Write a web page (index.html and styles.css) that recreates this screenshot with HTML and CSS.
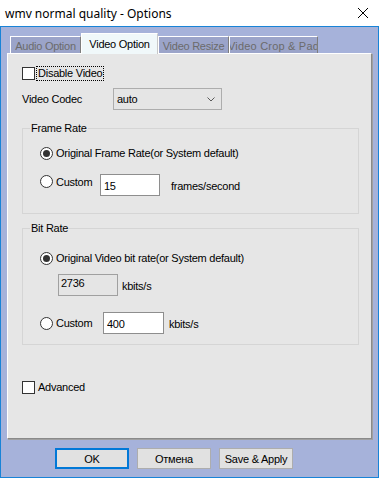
FILE: index.html
```html
<!doctype html>
<html lang="en">
    <head>
        <meta charset="UTF-8" />
        <title>wmv normal quality - Options</title>
        <link rel="stylesheet" href="styles.css">
    </head>
    <body>
        <div class="titlebar">
            <span class="title">wmv normal quality - Options</span>
            <svg class="close" width="12" height="12" viewBox="0 0 12 12">
                <path d="M1 1 L11 11 M11 1 L1 11" stroke="#000" stroke-width="1" fill="none" />
            </svg>
        </div>

        <div class="frame">
            <!-- Tabs -->
            <div class="tabs">
                <div class="tab tab-audio">Audio Option</div>
                <div class="tab tab-video active">Video Option</div>
                <div class="tab tab-resize">Video Resize</div>
                <div class="tab tab-crop"><span>Video Crop &amp; Pad</span></div>
            </div>

            <div class="panel">
                <div class="check-row first">
                    <span class="checkbox"></span>
                    <span class="check-label focus">Disable Video</span>
                </div>

                <div class="codec-row">
                    <span class="codec-label">Video Codec</span>
                    <div class="select">
                        <span>auto</span>
                        <svg class="chevron" width="8" height="5" viewBox="0 0 8 5">
                            <path d="M0.5 0.5 L4 4 L7.5 0.5" stroke="#5a5a5a" fill="none" />
                        </svg>
                    </div>
                </div>

                <!-- Frame Rate -->
                <fieldset class="group group-frame">
                    <legend>Frame Rate</legend>
                    <div class="radio-row fr-original">
                        <span class="radio checked"></span>
                        <span class="radio-label">Original Frame Rate(or System default)</span>
                    </div>
                    <div class="radio-row fr-custom">
                        <span class="radio"></span>
                        <span class="radio-label custom-label">Custom</span>
                        <input class="num" value="15" />
                        <span class="unit">frames/second</span>
                    </div>
                </fieldset>

                <!-- Bit Rate -->
                <fieldset class="group group-bit">
                    <legend>Bit Rate</legend>
                    <div class="radio-row br-original">
                        <span class="radio checked"></span>
                        <span class="radio-label">Original Video bit rate(or System default)</span>
                    </div>
                    <div class="rate-row">
                        <span class="readonly">2736</span>
                        <span class="unit">kbits/s</span>
                    </div>
                    <div class="radio-row br-custom">
                        <span class="radio"></span>
                        <span class="radio-label custom-label">Custom</span>
                        <input class="num" value="400" />
                        <span class="unit">kbits/s</span>
                    </div>
                </fieldset>

                <div class="check-row advanced">
                    <span class="checkbox"></span>
                    <span class="check-label">Advanced</span>
                </div>
            </div>

            <div class="buttons">
                <button class="default">OK</button>
                <button>Отмена</button>
                <button>Save &amp; Apply</button>
            </div>
        </div>
    </body>
</html>
```

FILE: styles.css
```css
:root {
    --accent: #1883d7;
    --chrome: #a6b2da;
    --tab-off: #9ba4c9;
    --tab-on: #f0f8fa;
    --face: #e6e6e6;
    --group-line: #d5d5d5;
    --field-line: #8e8e8e;
    --btn-face: #e1e1e1;
    --btn-line: #adadad;
}

* {
    box-sizing: border-box;
}

body {
    margin: 0;
    width: 379px;
    height: 478px;
    font-family: "Liberation Sans", Arial, sans-serif;
    font-size: 11px;
    letter-spacing: -0.25px;
    color: #000;
    background: #fff;
    overflow: hidden;
}

/* Title bar */
.titlebar {
    height: 26px;
    display: flex;
    align-items: center;
    justify-content: space-between;
    padding: 0 10px 0 5px;
    background: #fff;
}

.title {
    font-family: "Noto Sans", "Open Sans", sans-serif;
    font-size: 12px;
    letter-spacing: 0;
    color: #000;
}

.close {
    display: block;
}

/* Window body */
.frame {
    height: 452px;
    border: 1px solid var(--accent);
    background: var(--chrome);
}

.tabs {
    display: flex;
    align-items: flex-end;
    height: 26px;
    padding: 6px 0 0 9px;
}

.tab {
    height: 17px;
    display: flex;
    align-items: center;
    justify-content: center;
    white-space: nowrap;
    overflow: hidden;
    background: var(--tab-off);
    color: #6b6b6b;
    border-top: 1px solid #fff;
    border-left: 1px solid #fff;
    border-right: 1px solid #7d7d7d;
    padding-top: 1px;
}

.tab-audio { width: 71px; }
.tab-video { width: 77px; }
.tab-resize { width: 71px; }
.tab-crop { width: 89px; }

.tab-crop span {
    flex: none;
    letter-spacing: 0.2px;
}

.tab.active {
    height: 21px;
    margin-bottom: -1px;
    position: relative;
    background: var(--tab-on);
    color: #000;
    border-right-color: #c8c8c8;
    padding-top: 0;
}

.panel {
    width: 365px;
    height: 386px;
    margin-left: 6px;
    padding-left: 14px;
    background: var(--face);
    border-top: 1px solid #fff;
    border-left: 1px solid #fff;
    border-right: 1px solid #8a8a8a;
    border-bottom: 1px solid #8a8a8a;
    box-shadow: 1px 1px 0 #a0a0a0;
}

/* Check boxes */
.check-row {
    display: flex;
    align-items: center;
    height: 13px;
    line-height: 13px;
}

.check-row.first {
    margin-top: 13px;
}

.check-row.advanced {
    margin-top: 36px;
}

.checkbox {
    width: 13px;
    height: 13px;
    background: #fff;
    border: 1px solid #333;
}

.check-label {
    margin-left: 2px;
    padding: 0 1px;
}

.focus {
    outline: 1px dotted #000;
}

/* Codec */
.codec-row {
    display: flex;
    align-items: center;
    margin-top: 8px;
    height: 22px;
}

.codec-label {
    width: 91px;
}

.select {
    width: 109px;
    height: 22px;
    display: flex;
    align-items: center;
    justify-content: space-between;
    padding: 0 6px 0 3px;
    background: #e5e5e5;
    border: 1px solid var(--btn-line);
}

.chevron {
    display: block;
    margin-top: 1px;
}

/* Group boxes */
.group {
    width: 337px;
    margin: 12px 0 0;
    padding: 0 0 17px;
    border: 1px solid var(--group-line);
}

.group legend {
    margin-left: 7px;
    padding: 0 1px;
    line-height: 13px;
}

.group-bit {
    margin-top: 8px;
    padding-bottom: 10px;
}

.radio-row {
    display: flex;
    align-items: flex-start;
    margin-left: 17px;
    line-height: 13px;
}

.radio {
    width: 13px;
    height: 13px;
    flex: none;
    border: 1px solid #333;
    border-radius: 50%;
    background: #fff;
    display: flex;
    align-items: center;
    justify-content: center;
}

.radio.checked::after {
    content: "";
    width: 7px;
    height: 7px;
    border-radius: 50%;
    background: #333;
}

.radio-label {
    margin-left: 3px;
}

.fr-original {
    margin-top: 12px;
}

.fr-custom {
    margin-top: 14px;
}

.fr-custom .radio {
    margin-top: 1px;
}

.fr-custom .custom-label {
    width: 44px;
    margin-top: 2px;
}

.fr-custom .unit {
    margin: 6px 0 0 11px;
}

.br-original {
    margin-top: 17px;
}

.br-custom {
    margin-top: 16px;
}

.br-custom .radio {
    margin-top: 5px;
}

.br-custom .custom-label {
    width: 47px;
    margin-top: 5px;
}

.br-custom .num {
    width: 61px;
}

.br-custom .unit {
    margin: 6px 0 0 5px;
}

.num {
    width: 60px;
    height: 22px;
    margin: 0;
    padding: 2px 3px 0;
    font: inherit;
    letter-spacing: inherit;
    line-height: 13px;
    vertical-align: top;
    color: #000;
    background: #fff;
    border: 1px solid var(--field-line);
    border-radius: 0;
    outline: none;
}

.rate-row {
    display: flex;
    align-items: center;
    margin: 9px 0 0 35px;
}

.readonly {
    width: 60px;
    height: 22px;
    padding: 2px 2px 0;
    line-height: 13px;
    background: #e5e5e5;
    border: 1px solid #a0a0a0;
}

.rate-row .unit {
    margin-left: 4px;
    margin-top: 2px;
}

/* Dialog buttons */
.buttons {
    display: flex;
    gap: 8px;
    margin: 9px 0 0 54px;
}

button {
    width: 74px;
    height: 21px;
    padding: 0;
    font: inherit;
    letter-spacing: inherit;
    color: #000;
    background: var(--btn-face);
    border: 1px solid var(--btn-line);
    border-radius: 0;
}

button.default {
    border: 2px solid #0078d7;
}
```
